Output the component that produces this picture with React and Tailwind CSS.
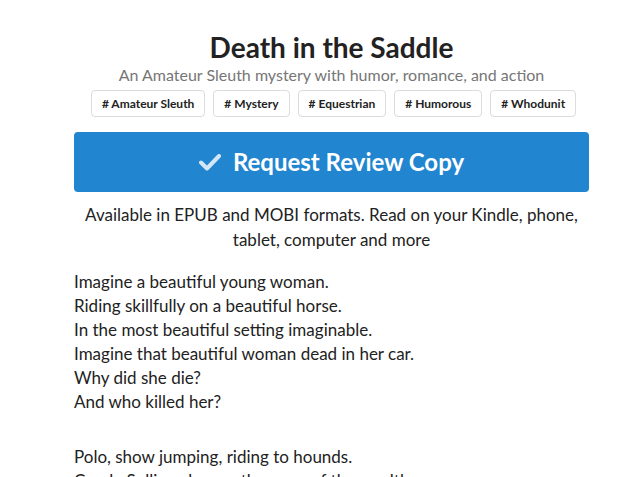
import React from 'react';

const tags = ['Amateur Sleuth', 'Mystery', 'Equestrian', 'Humorous', 'Whodunit'];

const blurb = [
  'Imagine a beautiful young woman.',
  'Riding skillfully on a beautiful horse.',
  'In the most beautiful setting imaginable.',
  'Imagine that beautiful woman dead in her car.',
  'Why did she die?',
  'And who killed her?',
];

const CheckIcon = () => (
  <svg width="22" height="18" viewBox="0 0 22 18" className="opacity-80">
    <path d="M2 9.5 L8 15.5 L20 3" fill="none" stroke="#fff" strokeWidth="4" strokeLinecap="round" strokeLinejoin="round" />
  </svg>
);

const App = () => {
  return (
    <div className="min-h-[477px] bg-white font-['Lato','Liberation_Sans',sans-serif] text-[#222]">
      <div className="w-[515px] ml-[74px] pt-[29px]">
        <h1 className="text-center text-[28px] leading-[36px] font-bold text-[#222]">Death in the Saddle</h1>
        <p className="text-center text-[16px] leading-[20px] text-[#767676]">
          An Amateur Sleuth mystery with humor, romance, and action
        </p>
        <div className="flex justify-center gap-2 mt-[5px] pl-[4px]">
          {tags.map(tag => (
            <span
              key={tag}
              className="h-[27px] px-[10px] flex items-center border border-[#dcdcdc] rounded text-[12px] font-bold text-[#222]"
            >
              # {tag}
            </span>
          ))}
        </div>
        <button className="w-full h-[60px] mt-[15px] bg-[#2185d0] rounded flex items-center justify-center gap-[12px] text-white text-[24px] font-bold">
          <CheckIcon />
          Request Review Copy
        </button>
        <p className="text-center text-[17px] leading-[25px] text-[#222] mt-[10px]">
          Available in EPUB and MOBI formats. Read on your Kindle, phone, tablet, computer and more
        </p>
        <div className="mt-[18px] text-[17px] leading-[24px] text-[#222]">
          {blurb.map(line => (
            <div key={line}>{line}</div>
          ))}
          <div className="h-[31px]" />
          <div>Polo, show jumping, riding to hounds.</div>
          <div>Carole Sullivan knows the ways of the wealthy.</div>
        </div>
      </div>
    </div>
  );
};

export default App;
